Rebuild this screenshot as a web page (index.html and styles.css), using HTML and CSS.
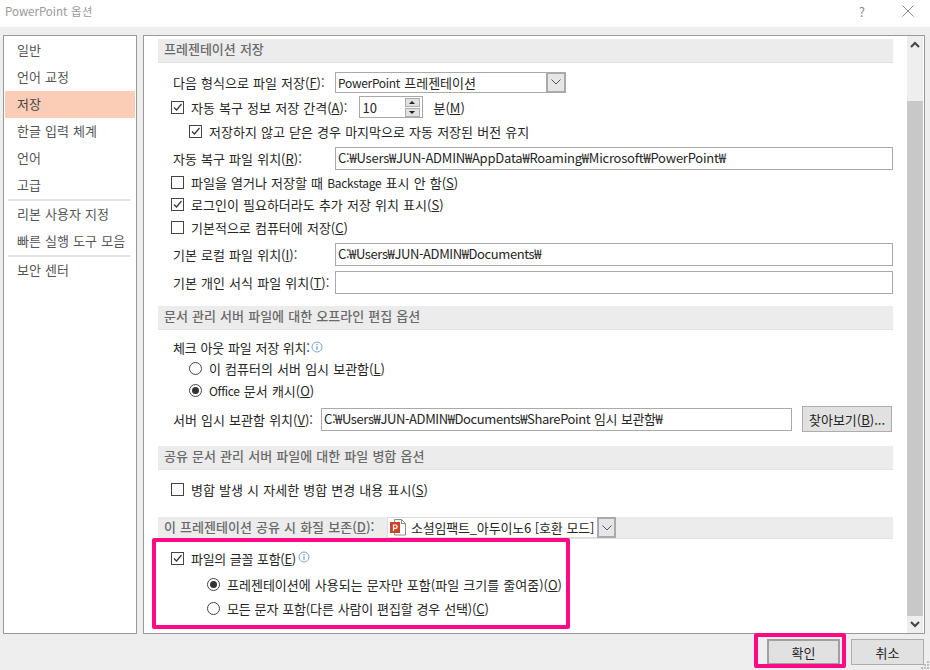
FILE: index.html
```html
<!DOCTYPE html>
<html lang="ko">
<head>
<meta charset="utf-8">
<title>PowerPoint 옵션</title>
<link rel="stylesheet" href="styles.css">
</head>
<body>
<div class="dialog">
  <header class="titlebar">
    <span class="title">PowerPoint 옵션</span>
    <span class="help">?</span>
    <svg class="close" width="12" height="12" viewBox="0 0 12 12"><path d="M.5.5l11 11M11.5.5l-11 11" stroke="#8a8a8a" fill="none"/></svg>
  </header>
  <div class="panes">
    <nav class="nav">
      <div class="nav-item">일반</div>
      <div class="nav-item">언어 교정</div>
      <div class="nav-item selected">저장</div>
      <div class="nav-item">한글 입력 체계</div>
      <div class="nav-item">언어</div>
      <div class="nav-item">고급</div>
      <div class="nav-sep"></div>
      <div class="nav-item">리본 사용자 지정</div>
      <div class="nav-item">빠른 실행 도구 모음</div>
      <div class="nav-sep"></div>
      <div class="nav-item">보안 센터</div>
    </nav>
    <main class="main">
      <div class="content">
        <h2 class="section">프레젠테이션 저장</h2>
        <div class="row m8">
          <label class="field-label">다음 형식으로 파일 저장(<u>F</u>):</label>
          <div class="select"><span class="select-text"><span class="latin">PowerPoint</span> 프레젠테이션</span><span class="select-btn"><svg width="10" height="6" viewBox="0 0 10 6"><path d="M.5.5L5 5 9.5.5" stroke="#555" fill="none"/></svg></span></div>
        </div>
        <div class="row m3 check-row">
          <span class="check on"><svg width="11" height="11" viewBox="0 0 11 11"><path d="M2 5.5l2.5 2.5L9.5 2" stroke="#333" stroke-width="1.2" fill="none"/></svg></span>
          <span class="check-label">자동 복구 정보 저장 간격(<u>A</u>):</span>
          <div class="spin"><span class="spin-text">10</span><span class="spin-btns"><span class="spin-btn"><i class="tri-up"></i></span><span class="spin-btn"><i class="tri-down"></i></span></span></div>
          <span class="spin-unit">분(<u>M</u>)</span>
        </div>
        <div class="row m2 check-row nested">
          <span class="check on"><svg width="11" height="11" viewBox="0 0 11 11"><path d="M2 5.5l2.5 2.5L9.5 2" stroke="#333" stroke-width="1.2" fill="none"/></svg></span>
          <span class="check-label">저장하지 않고 닫은 경우 마지막으로 자동 저장된 버전 유지</span>
        </div>
        <div class="row tall m4">
          <label class="field-label">자동 복구 파일 위치(<u>R</u>):</label>
          <div class="input">C:₩Users₩JUN-ADMIN₩AppData₩Roaming₩Microsoft₩PowerPoint₩</div>
        </div>
        <div class="row m1 check-row">
          <span class="check"></span>
          <span class="check-label">파일을 열거나 저장할 때 <span class="latin">Backstage</span> 표시 안 함(<u>S</u>)</span>
        </div>
        <div class="row check-row">
          <span class="check on"><svg width="11" height="11" viewBox="0 0 11 11"><path d="M2 5.5l2.5 2.5L9.5 2" stroke="#333" stroke-width="1.2" fill="none"/></svg></span>
          <span class="check-label">로그인이 필요하더라도 추가 저장 위치 표시(<u>S</u>)</span>
        </div>
        <div class="row m1 check-row">
          <span class="check"></span>
          <span class="check-label">기본적으로 컴퓨터에 저장(<u>C</u>)</span>
        </div>
        <div class="row tall m4">
          <label class="field-label">기본 로컬 파일 위치(<u>I</u>):</label>
          <div class="input tight">C:₩Users₩JUN-ADMIN₩Documents₩</div>
        </div>
        <div class="row tall m4">
          <label class="field-label">기본 개인 서식 파일 위치(<u>T</u>):</label>
          <div class="input"></div>
        </div>

        <h2 class="section m12">문서 관리 서버 파일에 대한 오프라인 편집 옵션</h2>
        <div class="row m6">
          <span class="plain-label">체크 아웃 파일 저장 위치:</span>
          <svg class="info" width="12" height="12" viewBox="0 0 12 12"><circle cx="6" cy="6" r="5" fill="none" stroke="#7aa7d8"/><path d="M6 3v1.2M6 5.2v3.6" stroke="#4a7fbd"/></svg>
        </div>
        <div class="row short nested radio-row">
          <span class="radio"></span>
          <span class="check-label">이 컴퓨터의 서버 임시 보관함(<u>L</u>)</span>
        </div>
        <div class="row short m2 nested radio-row">
          <span class="radio on"></span>
          <span class="check-label"><span class="latin">Office</span> 문서 캐시(<u>O</u>)</span>
        </div>
        <div class="row button-row m6">
          <label class="field-label narrow">서버 임시 보관함 위치(<u>V</u>):</label>
          <div class="input server tight">C:₩Users₩JUN-ADMIN₩Documents₩SharePoint 임시 보관함₩</div>
          <button class="browse">찾아보기(<u>B</u>)...</button>
        </div>

        <h2 class="section m14">공유 문서 관리 서버 파일에 대한 파일 병합 옵션</h2>
        <div class="row m8 check-row">
          <span class="check"></span>
          <span class="check-label">병합 발생 시 자세한 병합 변경 내용 표시(<u>S</u>)</span>
        </div>

        <h2 class="section compact m17">
          <span class="section-text">이 프레젠테이션 공유 시 화질 보존(<u>D</u>):</span>
          <span class="doc-select">
            <svg class="ppt" width="18" height="17" viewBox="0 0 18 17"><path d="M5.5.5h7l4 4v11.5h-11z" fill="#fff" stroke="#8a8a8a"/><path d="M12.5.5v4h4" fill="none" stroke="#8a8a8a"/><rect x="1" y="3" width="10" height="11" fill="#c8452a"/><path d="M4.5 12V6h2a1.7 1.7 0 0 1 0 3.4h-2" fill="none" stroke="#fff" stroke-width="1.2"/></svg>
            <span class="doc-text">소셜임팩트_아두이노6 [호환 모드]</span>
            <span class="doc-btn"><svg width="10" height="6" viewBox="0 0 10 6"><path d="M.5.5L5 5 9.5.5" stroke="#555" fill="none"/></svg></span>
          </span>
        </h2>
        <div class="row m8 check-row">
          <span class="check on"><svg width="11" height="11" viewBox="0 0 11 11"><path d="M2 5.5l2.5 2.5L9.5 2" stroke="#333" stroke-width="1.2" fill="none"/></svg></span>
          <span class="check-label snug-more">파일의 글꼴 포함(<u>E</u>)</span>
          <svg class="info raised" width="12" height="12" viewBox="0 0 12 12"><circle cx="6" cy="6" r="5" fill="none" stroke="#7aa7d8"/><path d="M6 3v1.2M6 5.2v3.6" stroke="#4a7fbd"/></svg>
        </div>
        <div class="row short m5 deep radio-row">
          <span class="radio on"></span>
          <span class="check-label">프레젠테이션에 사용되는 문자만 포함(파일 크기를 줄여줌)(<u>O</u>)</span>
        </div>
        <div class="row short m4 deep radio-row">
          <span class="radio"></span>
          <span class="check-label snug">모든 문자 포함(다른 사람이 편집할 경우 선택)(<u>C</u>)</span>
        </div>
      </div>
      <div class="scrollbar">
        <span class="arrow"><svg width="10" height="7" viewBox="0 0 10 7"><path d="M1 6l4-4 4 4" stroke="#444" stroke-width="2" fill="none"/></svg></span>
        <span class="track-top"></span>
        <span class="thumb"></span>
        <span class="arrow"><svg width="10" height="7" viewBox="0 0 10 7"><path d="M1 1l4 4 4-4" stroke="#444" stroke-width="2" fill="none"/></svg></span>
      </div>
    </main>
  </div>
  <footer class="footer">
    <button class="btn default">확인</button>
    <button class="btn">취소</button>
  </footer>
  <svg class="grip" width="8" height="8" viewBox="0 0 8 8"><path d="M6 0h2v2H6zM3 3h2v2H3zM6 3h2v2H6zM0 6h2v2H0zM3 6h2v2H3zM6 6h2v2H6z" fill="#bdbdbd"/></svg>
  <div class="mark mark-fonts"></div>
  <div class="mark mark-ok"></div>
</div>
</body>
</html>
```
FILE: styles.css
```css
* { box-sizing: border-box; }
html, body { margin: 0; padding: 0; }
body {
  width: 930px;
  height: 670px;
  overflow: hidden;
  font-family: "Noto Sans CJK KR", "Noto Sans", sans-serif;
  font-size: 13px;
  word-spacing: .5px;
  color: #262626;
}
.dialog {
  position: relative;
  width: 930px;
  height: 670px;
  background: #eeeeee;
  display: flex;
  flex-direction: column;
}
.titlebar {
  height: 27px;
  background: #fff;
  display: flex;
  align-items: center;
  padding: 0 16px 5px 5px;
}
.title { flex: 1; color: #9a9a9a; font-size: 11.5px; }
.help { color: #8a8a8a; font-size: 13px; margin-right: 37px; }
.panes {
  display: flex;
  gap: 6px;
  height: 607px;
  padding: 8px 5px 0 3px;
}
.nav {
  width: 134px;
  height: 599px;
  background: #fff;
  border: 1px solid #9a9a9a;
  padding: 1px 1px 0;
}
.nav-item {
  height: 27px;
  line-height: 26px;
  padding-left: 12px;
  color: #555;
}
.nav-item.selected { background: #fbcdb6; color: #444; }
.nav-sep {
  height: 2px;
  margin: 0 4px 0 3px;
  background: #e4e4e4;
}
.main {
  width: 782px;
  height: 599px;
  background: #fff;
  border: 1px solid #9a9a9a;
  display: flex;
  padding-right: 1px;
}
.content {
  width: 763px;
  padding: 3px 14px 0;
}
.section {
  height: 24px;
  margin: 0;
  padding-left: 6px;
  background: #ececec;
  border-bottom: 1px solid #e2e2e2;
  font-size: 13px;
  font-weight: 500;
  line-height: 20px;
  color: #6a6a6a;
}
.section.compact {
  height: 22px;
  display: flex;
  align-items: flex-start;
  line-height: 20px;
}
.section-text { width: 223px; flex: none; white-space: nowrap; }
.doc-select {
  width: 229px;
  height: 21px;
  background: #fff;
  border: 1px solid #dcdcdc;
  display: flex;
  align-items: center;
  color: #262626;
  font-weight: 400;
  flex: none;
}
.ppt { margin: 0 4px 0 1px; flex: none; }
.doc-text { flex: 1; white-space: nowrap; letter-spacing: -.2px; }
.doc-btn {
  width: 19px;
  height: 21px;
  margin-right: -1px;
  background: #e6e6e6;
  border: 2px solid #aaa;
  display: flex;
  align-items: center;
  justify-content: center;
  flex: none;
}
.row {
  height: 22px;
  display: flex;
  align-items: center;
  padding-left: 15px;
  white-space: nowrap;
}
.row.tall { height: 24px; }
.row.short { height: 20px; }
.row.button-row { height: 26px; }
.check-row { padding-left: 13px; }
.check-row.nested, .radio-row.nested { padding-left: 31px; }
.radio-row.deep { padding-left: 49px; }
.m1 { margin-top: 1px; }
.m2 { margin-top: 2px; }
.m3 { margin-top: 3px; }
.m4 { margin-top: 4px; }
.m5 { margin-top: 5px; }
.m6 { margin-top: 6px; }
.m8 { margin-top: 8px; }
.m12 { margin-top: 12px; }
.m14 { margin-top: 14px; }
.m17 { margin-top: 17px; }
.latin { font-size: 12px; letter-spacing: -.3px; }
.field-label { width: 162px; flex: none; }
.field-label.narrow { width: 148px; }
.plain-label { letter-spacing: -.2px; }
.select {
  width: 231px;
  height: 21px;
  border: 1px solid #aaa;
  display: flex;
  align-items: center;
  justify-content: space-between;
  background: #fff;
}
.select-text { padding-left: 2px; }
.select-btn {
  width: 20px;
  height: 21px;
  background: #e6e6e6;
  border: 2px solid #aaa;
  margin-right: -1px;
  display: flex;
  align-items: center;
  justify-content: center;
}
.input {
  width: 558px;
  height: 23px;
  border: 1px solid #aaa;
  background: #fff;
  line-height: 20px;
  padding-left: 2px;
  letter-spacing: -.22px;
}
.input.tight { letter-spacing: -.4px; }
.input.server { width: 471px; }
.browse {
  width: 90px;
  height: 26px;
  margin-left: 10px;
  padding: 0;
  background: #e1e1e1;
  border: 1px solid #adadad;
  font: inherit;
  color: #262626;
}
.check {
  width: 13px;
  height: 13px;
  border: 1px solid #444;
  background: #fff;
  flex: none;
  display: flex;
  align-items: center;
  justify-content: center;
}
.check-label { margin-left: 7px; }
.check-label.snug { letter-spacing: -.15px; }
.check-label.snug-more { letter-spacing: -.3px; }
.radio {
  width: 13px;
  height: 13px;
  border: 1px solid #444;
  border-radius: 50%;
  background: #fff;
  flex: none;
  display: flex;
  align-items: center;
  justify-content: center;
}
.radio.on::after {
  content: "";
  width: 7px;
  height: 7px;
  border-radius: 50%;
  background: #333;
}
.spin {
  width: 64px;
  height: 22px;
  margin-left: 11px;
  border: 1px solid #aaa;
  display: flex;
  align-items: center;
  justify-content: space-between;
  padding-left: 3px;
  padding-right: 2px;
}
.spin-btns { display: flex; flex-direction: column; gap: 1px; }
.spin-btn {
  width: 15px;
  height: 9px;
  background: #e1e1e1;
  border: 1px solid #adadad;
  display: flex;
  align-items: center;
  justify-content: center;
}
.tri-up, .tri-down {
  width: 0;
  height: 0;
  border-left: 3px solid transparent;
  border-right: 3px solid transparent;
}
.tri-up { border-bottom: 3px solid #222; }
.tri-down { border-top: 3px solid #222; }
.spin-unit { margin-left: 11px; }
.info { margin-left: 1px; flex: none; }
.info.raised { margin-left: 2px; margin-top: -3px; }
.scrollbar {
  width: 16px;
  background: #eee;
  display: flex;
  flex-direction: column;
}
.arrow {
  height: 17px;
  display: flex;
  align-items: center;
  justify-content: center;
  flex: none;
}
.track-top { height: 48px; flex: none; }
.thumb { flex: 1; background: #c8c8c8; }
.footer {
  height: 36px;
  display: flex;
  justify-content: flex-end;
  gap: 11px;
  padding: 5px 6px 0 0;
}
.btn {
  width: 73px;
  height: 26px;
  padding: 0;
  background: #e1e1e1;
  border: 1px solid #adadad;
  font: inherit;
  color: #262626;
}
.btn.default { border: 2px solid #a0a0a0; }
.grip { position: absolute; right: 1px; bottom: 1px; }
.mark {
  position: absolute;
  border: 4px solid #ff0a85;
  border-radius: 2px;
}
.mark-fonts { left: 152px; top: 538px; width: 418px; height: 91px; }
.mark-ok { left: 754px; top: 633px; width: 92px; height: 35px; }
u { text-underline-offset: 1px; }
```
